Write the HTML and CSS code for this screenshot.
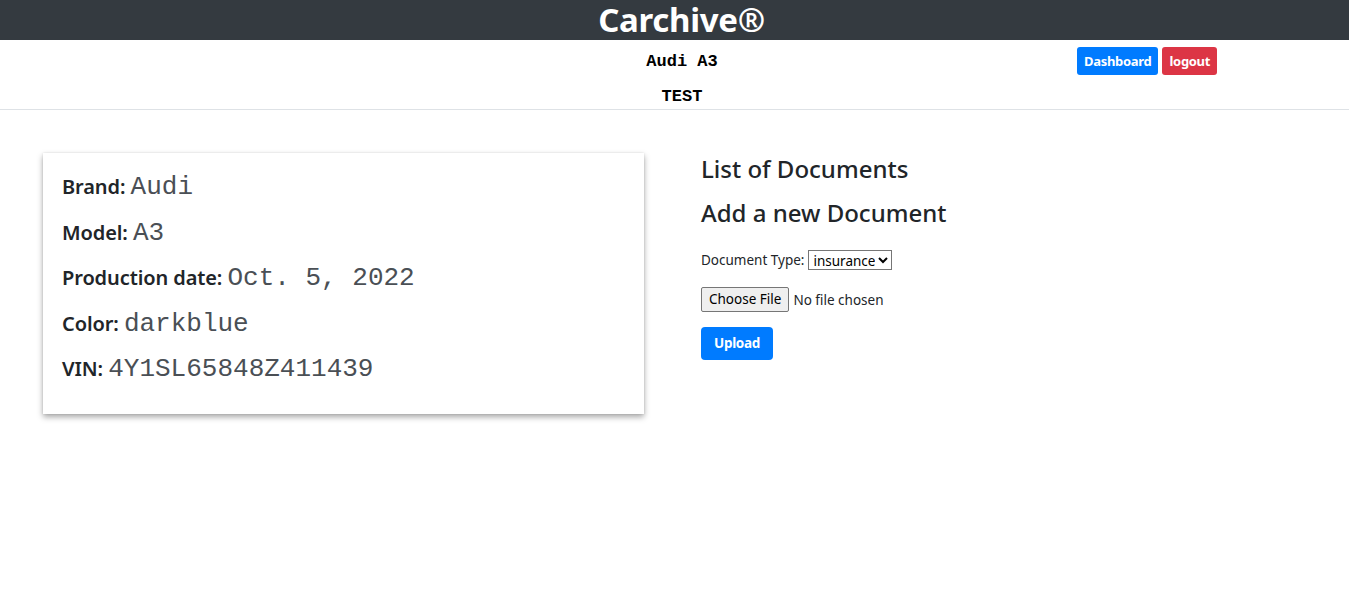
FILE: index.html
```html
<!DOCTYPE html>
<html>
<head>
<meta charset="utf-8">
<link rel="stylesheet" href="styles.css">
</head>
<body>
<header class="topbar"><h1 class="brand">Carchive®</h1></header>
<nav class="subbar">
  <div class="subtitle">
    <div class="sub-line">Audi A3</div>
    <div class="sub-line">TEST</div>
  </div>
  <div class="actions">
    <a class="btn btn-blue">Dashboard</a>
    <a class="btn btn-red">logout</a>
  </div>
</nav>
<main class="content">
  <section class="card">
    <p class="field"><span class="label">Brand:</span> <span class="value">Audi</span></p>
    <p class="field"><span class="label">Model:</span> <span class="value">A3</span></p>
    <p class="field"><span class="label">Production date:</span> <span class="value">Oct. 5, 2022</span></p>
    <p class="field"><span class="label">Color:</span> <span class="value">darkblue</span></p>
    <p class="field"><span class="label">VIN:</span> <span class="value">4Y1SL65848Z411439</span></p>
  </section>
  <section class="docs">
    <h4 class="heading">List of Documents</h4>
    <h4 class="heading">Add a new Document</h4>
    <form class="upload-form">
      <div class="form-row"><label class="small-label">Document Type:</label> <select class="select"><option>insurance</option></select></div>
      <div class="form-row row-file"><span class="file-btn">Choose File</span><span class="file-text">No file chosen</span></div>
      <div class="form-row"><span class="btn btn-blue btn-upload">Upload</span></div>
    </form>
  </section>
</main>
</body>
</html>
```
FILE: styles.css
```css
* { box-sizing: border-box; }
body { margin: 0; font-family: "Noto Sans", "Open Sans", sans-serif; color: #212529; background: #fff; }
.topbar { background: #343a40; height: 40px; display: flex; justify-content: center; align-items: center; }
.brand { margin: 0; color: #fff; font-size: 33px; font-weight: 700; line-height: 40px; padding-left: 14px; letter-spacing: -0.3px; }
.subbar { position: relative; height: 70px; border-bottom: 1px solid #dee2e6; display: flex; justify-content: center; }
.subtitle { padding-left: 15px; display: flex; flex-direction: column; align-items: center; padding-top: 12px; gap: 15px; }
.sub-line { font-family: "Liberation Mono", "Courier New", monospace; font-weight: 700; font-size: 17px; line-height: 20px; color: #000; }
.actions { position: absolute; left: 1077px; top: 7px; display: flex; gap: 4px; }
.btn { display: inline-block; color: #fff; font-weight: 700; font-size: 13px; border-radius: 3px; padding: 0 7px; height: 28px; line-height: 28px; letter-spacing: -0.3px; }
.btn-blue { background: #007bff; }
.btn-red { background: #dc3545; }
.content { display: flex; padding: 43px 0 40px 43px; }
.card { width: 601px; height: 261px; box-shadow: 0 3px 6px rgba(0,0,0,0.35), 0 0 2px rgba(0,0,0,0.1); padding: 21px 19px 0; background: #fff; }
.field { margin: 0 0 19.5px; font-size: 20px; line-height: 26px; height: 26px; }
.label { font-weight: 600; letter-spacing: -0.1px; }
.value { font-family: "Liberation Mono", "Courier New", monospace; font-size: 26px; font-weight: 400; color: #4a4f55; }
.docs { margin-left: 57px; padding-top: 1px; }
.heading { margin: 0 0 14px; font-size: 24px; font-weight: 500; line-height: 30px; }
.upload-form { margin-top: 22px; }
.form-row { display: flex; align-items: center; font-size: 13.5px; margin-bottom: 17px; }
.row-file { margin-bottom: 15px; }
.small-label { margin-right: 4px; }
.select { font-family: "Noto Sans", sans-serif; font-size: 13.5px; height: 20px; padding: 0; border: 1px solid #767676; border-radius: 0; background: #fff; color: #000; }
.file-btn { background: #efefef; border: 1px solid #767676; border-radius: 2px; padding: 0 7px; height: 25px; line-height: 23px; font-size: 13.5px; color: #000; margin-right: 4px; }
.file-text { font-size: 13.5px; }
.btn-upload { height: 33px; line-height: 33px; padding: 0 13px; border-radius: 4px; font-size: 13.5px; }
```
